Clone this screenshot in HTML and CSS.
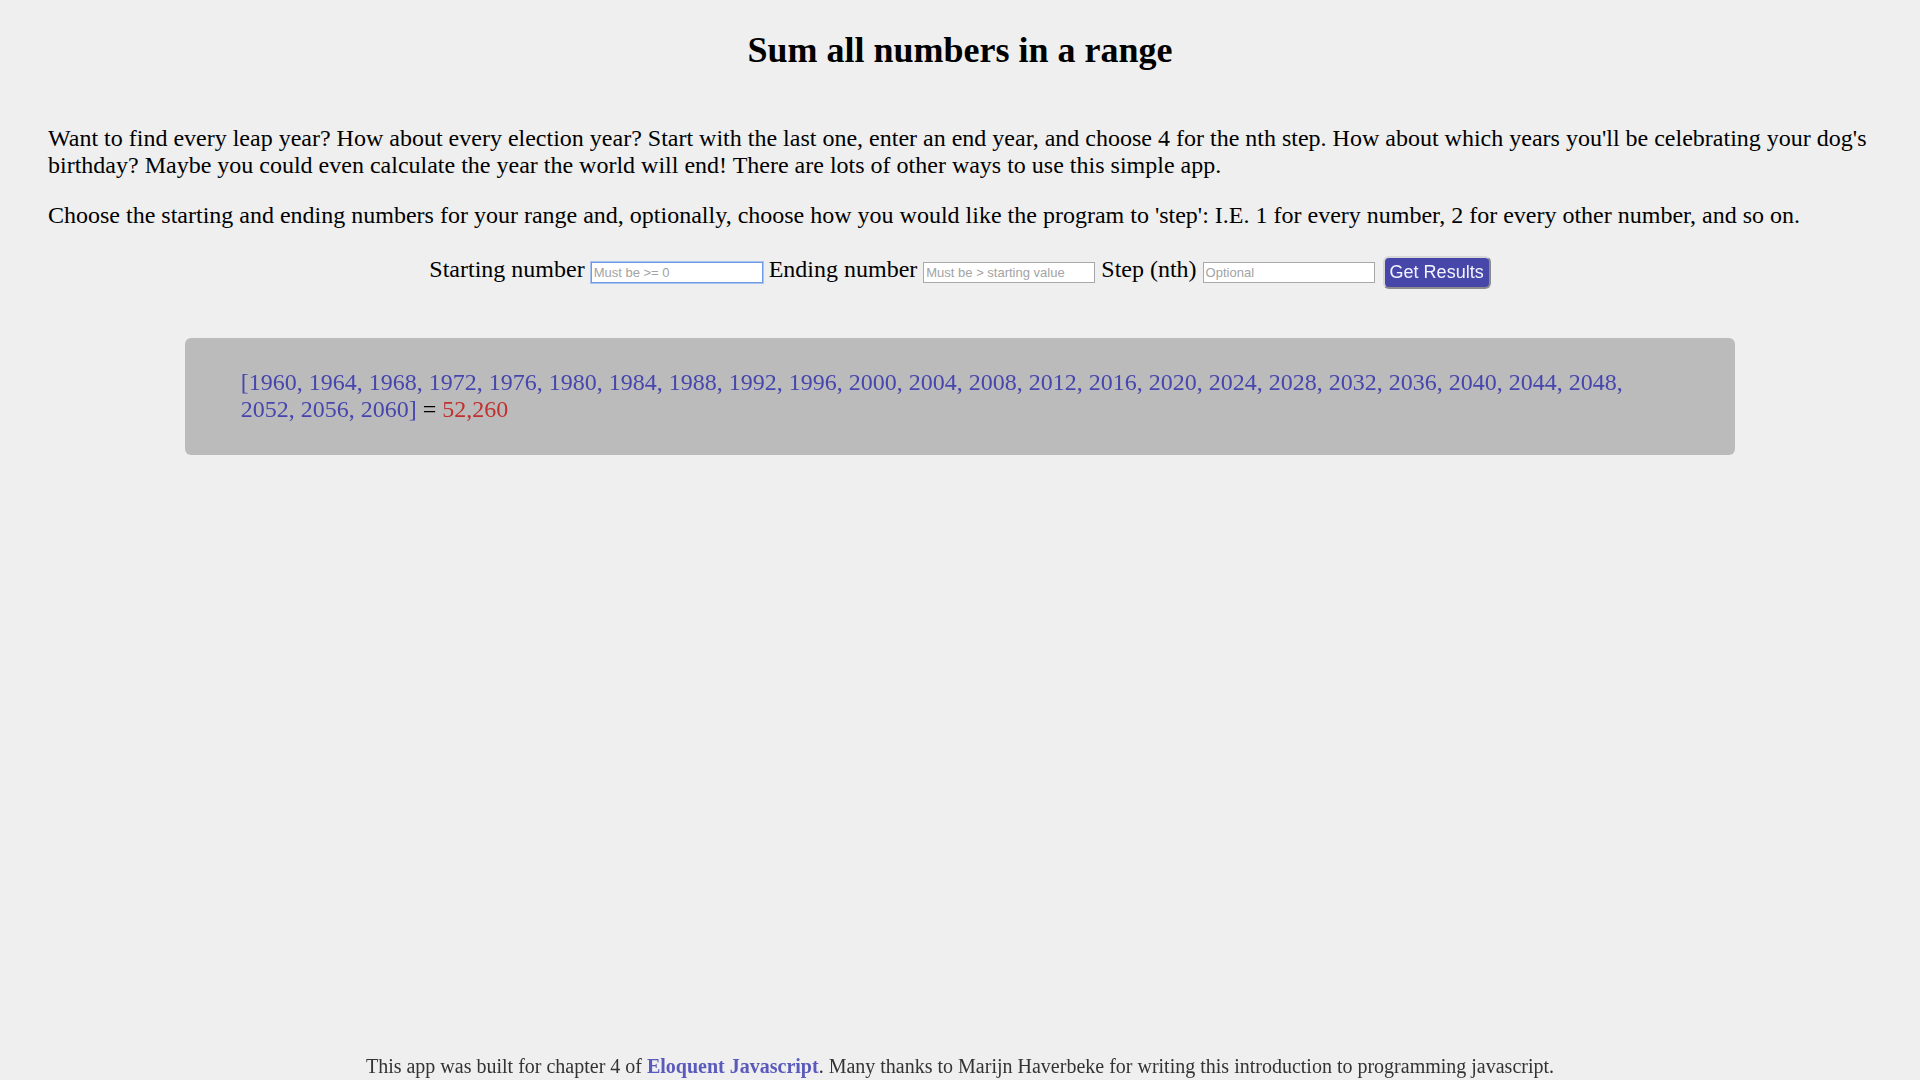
FILE: index.html
```html
<!DOCTYPE html>
<html lang="en">
<head>
<meta charset="utf-8">
<title>Sum all numbers in a range</title>
<link rel="stylesheet" href="styles.css">
</head>
<body>
<div class="page">
  <main class="content">
    <h1 class="title">Sum all numbers in a range</h1>
    <p class="intro">Want to find every leap year? How about every election year? Start with the last one, enter an end year, and choose 4 for the nth step. How about which years you'll be celebrating your dog's birthday? Maybe you could even calculate the year the world will end! There are lots of other ways to use this simple app.</p>
    <p class="intro">Choose the starting and ending numbers for your range and, optionally, choose how you would like the program to 'step': I.E. 1 for every number, 2 for every other number, and so on.</p>
    <form class="controls">
      <label class="field-label" for="start">Starting number</label>
      <input class="field field-focus" id="start" type="text" placeholder="Must be &gt;= 0" autofocus>
      <label class="field-label" for="end">Ending number</label>
      <input class="field" id="end" type="text" placeholder="Must be &gt; starting value">
      <label class="field-label" for="step">Step (nth)</label>
      <input class="field" id="step" type="text" placeholder="Optional">
      <button class="go" type="button">Get Results</button>
    </form>
    <div class="result">
      <span class="list">[1960, 1964, 1968, 1972, 1976, 1980, 1984, 1988, 1992, 1996, 2000, 2004, 2008, 2012, 2016, 2020, 2024, 2028, 2032, 2036, 2040, 2044, 2048, 2052, 2056, 2060]</span> = <span class="sum">52,260</span>
    </div>
  </main>
  <footer class="footer">This app was built for chapter 4 of <a class="footer-link" href="#">Eloquent Javascript</a>. Many thanks to Marijn Haverbeke for writing this introduction to programming javascript.</footer>
</div>
</body>
</html>
```

FILE: styles.css
```css
html, body {
  margin: 0;
  padding: 0;
  background: #efefef;
}

body {
  font-family: "Liberation Serif", "Times New Roman", serif;
  color: #000;
}

.page {
  min-height: 100vh;
  box-sizing: border-box;
  display: flex;
  flex-direction: column;
  padding: 0 48px 2px;
}

.content {
  flex: 1;
}

.title {
  margin: 30px 0 0;
  font-size: 36px;
  line-height: 41px;
  font-weight: bold;
  text-align: center;
}

.intro {
  font-size: 24px;
  line-height: 27px;
  margin: 54px 0 0;
}

.intro + .intro {
  margin-top: 23px;
}

.controls {
  margin: 27px 0 0;
  text-align: center;
  font-size: 24px;
  line-height: 27px;
}

.field-label {
  font-size: 24px;
}

.field {
  box-sizing: border-box;
  width: 172px;
  height: 21px;
  margin: 0;
  padding: 1px 2px;
  border: 1px solid #a9a9a9;
  background: #fff;
  font-family: "Liberation Sans", Arial, sans-serif;
  font-size: 13px;
  outline: none;
  caret-color: #000;
}

.field::placeholder {
  color: #a3a3a3;
}

.field-focus {
  border-color: #6f9be6;
  box-shadow: 0 0 0 1px #a9c3f0;
}

.go {
  box-sizing: border-box;
  height: 33px;
  margin: 0 0 0 2px;
  padding: 0 5px;
  background: #4747aa;
  color: #f4f4ff;
  border: 2px solid;
  border-color: #d8d8d8 #8c8c8c #8c8c8c #d8d8d8;
  border-radius: 6px;
  font-family: "Liberation Sans", Arial, sans-serif;
  font-size: 18px;
  vertical-align: -1px;
}

.result {
  width: 85%;
  box-sizing: border-box;
  margin: 49px auto 0;
  padding: 31px 56px 32px;
  background: #bbbbbb;
  border-radius: 6px;
  font-size: 24px;
  line-height: 27px;
}

.list {
  color: #4646ae;
}

.sum {
  color: #c0302e;
}

.footer {
  text-align: center;
  font-size: 20px;
  line-height: 23px;
  color: #333;
}

.footer-link {
  color: #5a5abd;
  font-weight: bold;
  text-decoration: none;
}
```
